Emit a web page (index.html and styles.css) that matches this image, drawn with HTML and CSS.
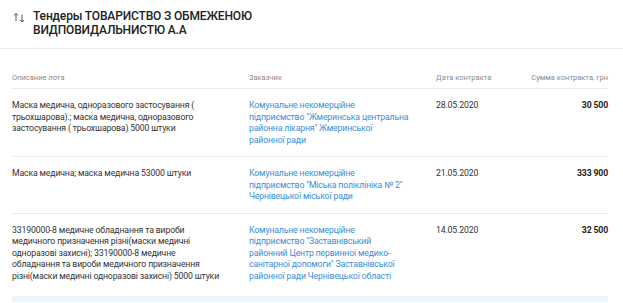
FILE: index.html
```html
<!DOCTYPE html>
<html lang="uk">
<head>
<meta charset="utf-8">
<title>Тендеры</title>
<link rel="stylesheet" href="styles.css">
</head>
<body>
<div class="page">
  <header class="title-bar">
    <svg class="sort-icon" width="12" height="11" viewBox="0 0 12 11" aria-hidden="true">
      <path d="M3 9V1.5M1 3.5L3 1.5L5 3.5" fill="none" stroke="#555" stroke-width="1"/>
      <path d="M9 2.5V10M7 8L9 10L11 8" fill="none" stroke="#555" stroke-width="1"/>
    </svg>
    <h2 class="title">Тендеры ТОВАРИСТВО З ОБМЕЖЕНОЮ ВИДПОВИДАЛЬНИСТЮ А.А</h2>
  </header>

  <div class="table">
    <div class="row head">
      <div class="cell desc">Описание лота</div>
      <div class="cell cust">Заказчик</div>
      <div class="cell date">Дата контракта</div>
      <div class="cell sum">Сумма контракта, грн</div>
    </div>

    <div class="row">
      <div class="cell desc">Маска медична, одноразового застосування ( трьохшарова).; маска медична, одноразового застосування ( трьохшарова) 5000 штуки</div>
      <div class="cell cust"><a class="link" href="#">Комунальне некомерційне підприємство "Жмеринська центральна районна лікарня" Жмеринської районної ради</a></div>
      <div class="cell date">28.05.2020</div>
      <div class="cell sum">30 500</div>
    </div>

    <div class="row">
      <div class="cell desc">Маска медична; маска медична 53000 штуки</div>
      <div class="cell cust"><a class="link" href="#">Комунальне некомерційне підприємство "Міська поліклініка № 2" Чернівецької міської ради</a></div>
      <div class="cell date">21.05.2020</div>
      <div class="cell sum">333 900</div>
    </div>

    <div class="row last">
      <div class="cell desc">33190000-8 медичне обладнання та вироби медичного призначення різні(маски медичні одноразові захисні); 33190000-8 медичне обладнання та вироби медичного призначення різні(маски медичні одноразові захисні) 5000 штуки</div>
      <div class="cell cust"><a class="link" href="#">Комунальне некомерційне підприємство "Заставнівський районний Центр первинної медико-санітарної допомоги" Заставнівської районної ради Чернівецької області</a></div>
      <div class="cell date">14.05.2020</div>
      <div class="cell sum">32 500</div>
    </div>
  </div>

  <div class="band"></div>
</div>
</body>
</html>
```

FILE: styles.css
```css
html, body {
  margin: 0;
  padding: 0;
  background: #ffffff;
}

body {
  font-family: Roboto, "Noto Sans", "DejaVu Sans", sans-serif;
  color: #333333;
}

.page {
  width: 623px;
  overflow: hidden;
}

.title-bar {
  display: flex;
  align-items: flex-start;
  gap: 8px;
  padding: 9px 12px 11px 13px;
  border-bottom: 1px solid #ececec;
}

.sort-icon {
  flex: none;
  margin-top: 3px;
}

.title {
  margin: 0;
  max-width: 250px;
  font-size: 12px;
  line-height: 14px;
  letter-spacing: -0.15px;
  font-weight: 500;
  color: #222222;
}

.table {
  margin: 0 15px 0 12px;
}

.row {
  display: grid;
  grid-template-columns: 237px 187px 1fr 100px;
  padding: 11px 0 10px;
  border-bottom: 1px solid #ececec;
  font-size: 8.7px;
  line-height: 11.5px;
  letter-spacing: -0.15px;
}

.row.head {
  padding: 24px 0 5px;
  font-size: 7.5px;
  line-height: 10px;
  letter-spacing: 0;
  color: #8a8a8a;
}

.row.last {
  border-bottom: none;
}

.cell.desc {
  padding-right: 28px;
}

.cell.cust {
  padding-right: 27px;
}

.cell.sum {
  text-align: right;
}

.row:not(.head) .cell.sum {
  font-weight: 700;
  color: #222222;
}

.link {
  color: #3b8ed4;
  text-decoration: none;
}

.band {
  height: 6px;
  margin: 4px 15px 0 12px;
  background: #eef5fc;
}
```
